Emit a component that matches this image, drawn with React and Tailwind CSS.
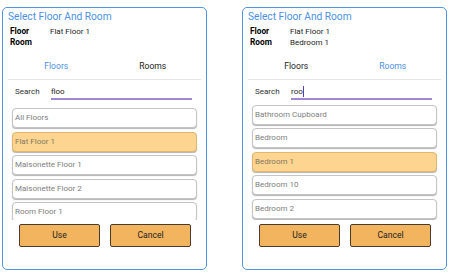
import { useState } from "react";

const floorItems = ["All Floors", "Flat Floor 1", "Maisonette Floor 1", "Maisonette Floor 2", "Room Floor 1"];
const roomItems = ["Bathroom Cupboard", "Bedroom", "Bedroom 1", "Bedroom 10", "Bedroom 2"];

function ListItem({ label, selected }) {
  return (
    <div
      className={`h-[20px] shrink-0 rounded-[4px] border pl-[2px] text-[8px] leading-[18px] shadow-[0_1px_1px_rgba(0,0,0,0.3)] ${
        selected ? "bg-[#fdd590] border-[#e3b66c] text-[#857560]" : "bg-white border-[#c4c4c4] text-[#7e7e7e]"
      }`}
    >
      {label}
    </div>
  );
}

function Picker({ tab, query, room, items, selected, offset, caret }) {
  return (
    <div className="w-[205px] h-[263px] shrink-0 rounded-[5px] border border-[#4d94e6] bg-white flex flex-col">
      <div className="h-[18px] pl-[5px] text-[10.2px] leading-[18px] text-[#4a90e2]">Select Floor And Room</div>

      <div className="pl-[7px] text-[8px] leading-[11px] text-[#222]">
        <div className="flex h-[11px]">
          <span className="w-[40px] font-bold text-[8.3px] text-black">Floor</span>
          <span>Flat Floor 1</span>
        </div>
        <div className="flex h-[11px]">
          <span className="w-[40px] font-bold text-[8.3px] text-black">Room</span>
          <span>{room}</span>
        </div>
      </div>

      <div className="mt-[9px] mx-[5px] flex h-[18px] text-[8.6px] leading-[18px]">
        <div className={`flex-1 text-center ${tab === "floors" ? "text-[#4a90e2]" : "text-[#222]"}`}>Floors</div>
        <div className={`flex-1 text-center ${tab === "rooms" ? "text-[#4a90e2]" : "text-[#222]"}`}>Rooms</div>
      </div>

      <div className="mt-[4px] mx-[5px] h-px bg-[#e4e4e4]" />

      <div className="mt-[5px] flex pl-[12px] text-[8px] leading-[13px]">
        <span className="w-[36px] text-[#333]">Search</span>
        <div className="w-[141px] border-b-2 border-[#a086d4] h-[15px] text-[#222] flex">
          <span>{query}</span>
          {caret && <span className="w-px h-[11px] mt-[1px] bg-[#5b3fa8]" />}
        </div>
      </div>

      <div className="mt-[5px] h-[115px] overflow-hidden px-[9px]">
        <div className={`flex flex-col gap-[3.5px] ${offset}`}>
          {items.map((it) => (
            <ListItem key={it} label={it} selected={it === selected} />
          ))}
        </div>
      </div>

      <div className="mt-[4px] flex gap-[10px] pl-[16px]">
        <button className="w-[81px] h-[23px] rounded-[2px] border border-[#4a3c2c] bg-[#f2b45e] text-[8.6px] text-[#222]">
          Use
        </button>
        <button className="w-[81px] h-[23px] rounded-[2px] border border-[#4a3c2c] bg-[#f2b45e] text-[8.6px] text-[#222]">
          Cancel
        </button>
      </div>
    </div>
  );
}

export default function App() {
  const [screens] = useState([
    { tab: "floors", query: "floo", room: "", items: floorItems, selected: "Flat Floor 1", offset: "pt-[3px]", caret: false },
    { tab: "rooms", query: "roo", room: "Bedroom 1", items: roomItems, selected: "Bedroom 1", offset: "-mt-[0.5px]", caret: true },
  ]);

  return (
    <div className="w-[449px] h-[273px] bg-white font-['Roboto',sans-serif] flex gap-[35px] pt-[7px] pl-[2px]">
      {screens.map((s, i) => (
        <Picker key={i} {...s} />
      ))}
    </div>
  );
}
